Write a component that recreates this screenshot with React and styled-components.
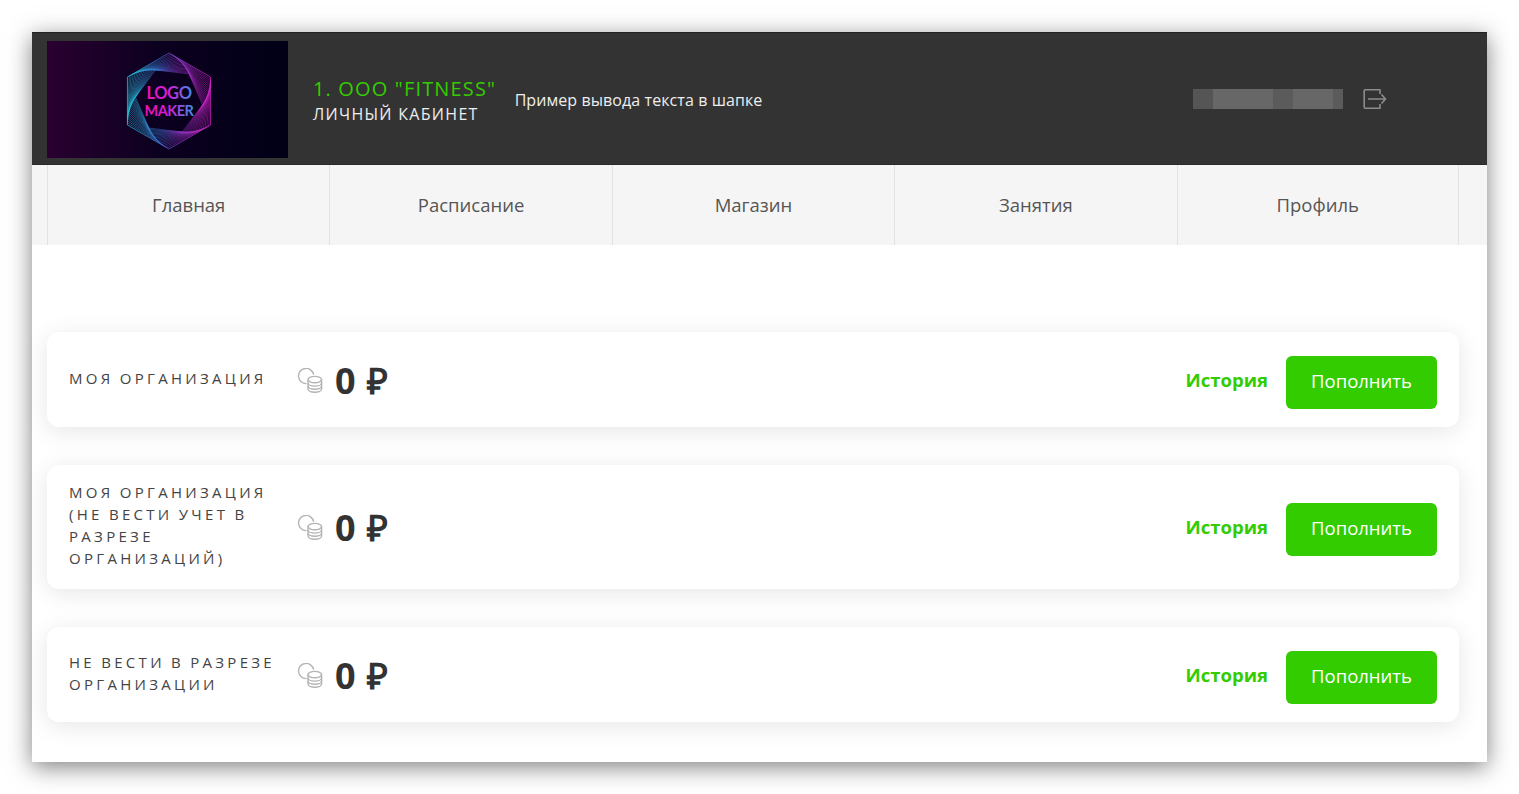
import styled, { createGlobalStyle } from 'styled-components'

const GREEN = '#33cc00'

const GlobalStyle = createGlobalStyle`
  html, body {
    margin: 0;
    padding: 0;
    background: #fff;
  }
  body {
    font-family: 'Open Sans', 'Liberation Sans', sans-serif;
    color: #333;
  }
`

const accounts = [
  { id: 1, name: 'Моя организация' },
  { id: 2, name: 'Моя организация (не вести учет в разрезе организаций)' },
  { id: 3, name: 'Не вести в разрезе организации' },
]

const menu = ['Главная', 'Расписание', 'Магазин', 'Занятия', 'Профиль']

// name is blurred in the screenshot, so just blocks of grey
const blurBlocks = [
  { w: 20, c: '#555' },
  { w: 60, c: '#676767' },
  { w: 20, c: '#5b5b5b' },
  { w: 40, c: '#676767' },
  { w: 10, c: '#5b5b5b' },
]

// each hexagon sits on the sides of the previous one, gives the twisted net
function hexRings(cx, cy, r, steps, t) {
  let pts = []
  for (let i = 0; i < 6; i++) {
    const a = (Math.PI / 3) * i - Math.PI / 2
    pts.push([cx + r * Math.cos(a), cy + r * Math.sin(a)])
  }
  const rings = []
  for (let s = 0; s < steps; s++) {
    rings.push(pts.map(p => p[0].toFixed(2) + ',' + p[1].toFixed(2)).join(' '))
    pts = pts.map((p, i) => {
      const n = pts[(i + 1) % 6]
      return [p[0] + (n[0] - p[0]) * t, p[1] + (n[1] - p[1]) * t]
    })
  }
  return rings
}

const rings = hexRings(122, 60, 48, 17, 0.045)

function Logo() {
  return (
    <LogoBox>
      <svg width="241" height="117" viewBox="0 0 241 117">
        <defs>
          <linearGradient id="logoBg" x1="0" x2="1" y1="0" y2="0">
            <stop offset="0" stopColor="#2a0030" />
            <stop offset="0.45" stopColor="#0c0020" />
            <stop offset="1" stopColor="#000016" />
          </linearGradient>
          <linearGradient id="logoHex" gradientUnits="userSpaceOnUse" x1="78" y1="60" x2="166" y2="60">
            <stop offset="0" stopColor="#1fd6e0" />
            <stop offset="0.38" stopColor="#3a78d8" />
            <stop offset="0.58" stopColor="#8a3ac8" />
            <stop offset="1" stopColor="#e820d0" />
          </linearGradient>
          <linearGradient id="logoText" gradientUnits="userSpaceOnUse" x1="98" y1="0" x2="146" y2="0">
            <stop offset="0" stopColor="#f010b0" />
            <stop offset="0.5" stopColor="#d020d8" />
            <stop offset="1" stopColor="#3a90e8" />
          </linearGradient>
        </defs>
        <rect width="241" height="117" fill="url(#logoBg)" />
        {rings.map((pts, i) => (
          <polygon
            key={i}
            points={pts}
            fill="none"
            stroke="url(#logoHex)"
            strokeWidth={i === 0 ? 0.8 : 0.5}
            opacity={0.9}
          />
        ))}
        <LogoWord x="122" y="58" textAnchor="middle" fontSize="16.5" letterSpacing="-0.4">LOGO</LogoWord>
        <LogoWord x="122" y="75" textAnchor="middle" fontSize="14.5" letterSpacing="-0.5">MAKER</LogoWord>
      </svg>
    </LogoBox>
  )
}

function LogoutIcon() {
  return (
    <svg width="24" height="22" viewBox="0 0 24 22" fill="none" stroke="#8c8c8c" strokeWidth="1.6">
      <path d="M17 6V1.8H2.2a1 1 0 0 0-1 1v16.4a1 1 0 0 0 1 1H17V16" strokeLinejoin="round" />
      <path d="M5 11h17.5M18.5 6.5l4 4.5-4 4.5" />
    </svg>
  )
}

function CoinsIcon() {
  return (
    <CoinsSvg width="26" height="25" viewBox="0 0 26 25" fill="none" stroke="#b4b4b4" strokeWidth="1.4">
      <path d="M9.5 15.6A7.6 7.6 0 1 1 16.6 6.6" />
      <ellipse cx="17.8" cy="11.6" rx="6.8" ry="3.2" />
      <path d="M11 11.6v9.4c0 1.8 3 3.2 6.8 3.2s6.8-1.4 6.8-3.2v-9.4" />
      <path d="M11 14.9c0 1.8 3 3.2 6.8 3.2s6.8-1.4 6.8-3.2" />
      <path d="M11 18c0 1.8 3 3.2 6.8 3.2s6.8-1.4 6.8-3.2" />
    </CoinsSvg>
  )
}

function App() {
  return (
    <>
      <GlobalStyle />
      <Page>
        <Window>
          <Header>
            <Logo />
            <TitleBlock>
              <OrgName>1. ООО "FITNESS"</OrgName>
              <CabinetLabel>Личный кабинет</CabinetLabel>
            </TitleBlock>
            <HeaderNote>Пример вывода текста в шапке</HeaderNote>
            <UserBox>
              <BlurName>
                {blurBlocks.map((b, i) => (
                  <BlurPiece key={i} $w={b.w} $c={b.c} />
                ))}
              </BlurName>
              <LogoutIcon />
            </UserBox>
          </Header>

          <Nav>
            {menu.map((item, i) => (
              <NavItem key={item} $last={i === menu.length - 1}>{item}</NavItem>
            ))}
          </Nav>

          <Content>
            {accounts.map(acc => (
              <Card key={acc.id}>
                <CardName>{acc.name}</CardName>
                <CoinsIcon />
                <Amount>0 ₽</Amount>
                <HistoryLink>История</HistoryLink>
                <TopUpButton>Пополнить</TopUpButton>
              </Card>
            ))}
          </Content>
        </Window>
      </Page>
    </>
  )
}

const Page = styled.div`
  padding: 32px 32px 32px;
  box-sizing: border-box;
  height: 794px;
  overflow: hidden;
`

const Window = styled.div`
  background: #fff;
  height: 730px;
  box-shadow: 0 5px 22px rgba(0, 0, 0, 0.5);
`

const Header = styled.header`
  display: flex;
  align-items: center;
  height: 133px;
  box-sizing: border-box;
  padding: 2px 100px 0 15px;
  background: #333333;
  border-top: 1px solid #222;
  border-bottom: 1px solid #2a2a2a;
`

const LogoBox = styled.div`
  flex: none;
  width: 241px;
  height: 117px;
  line-height: 0;
`

const LogoWord = styled.text`
  font-family: 'Lato', 'Open Sans', sans-serif;
  font-weight: 700;
  fill: url(#logoText);
`

const TitleBlock = styled.div`
  margin-left: 25px;
  padding-top: 3px;
`

const OrgName = styled.div`
  font-size: 20px;
  line-height: 26px;
  letter-spacing: 1.15px;
  color: ${GREEN};
`

const CabinetLabel = styled.div`
  font-size: 16px;
  font-weight: 500;
  line-height: 24px;
  letter-spacing: 1.3px;
  text-transform: uppercase;
  color: #eeeeee;
`

const HeaderNote = styled.div`
  margin-left: 18.5px;
  font-size: 16px;
  font-weight: 500;
  letter-spacing: 0.08px;
  color: #eeeeee;
`

const UserBox = styled.div`
  display: flex;
  align-items: center;
  gap: 20px;
  margin: 0 0 2px auto;
`

const BlurName = styled.div`
  display: flex;
  height: 20px;
`

const BlurPiece = styled.span`
  width: ${p => p.$w}px;
  background: ${p => p.$c};
`

const Nav = styled.nav`
  display: grid;
  grid-template-columns: repeat(5, 282.4px);
  height: 80px;
  padding: 0 0 0 15px;
  background: #f5f5f5;
`

const NavItem = styled.a`
  display: flex;
  align-items: center;
  justify-content: center;
  padding-bottom: 2px;
  font-size: 18.5px;
  color: #555555;
  border-left: 1px solid #e2e2e2;
  border-right: ${p => (p.$last ? '1px solid #e2e2e2' : 'none')};
`

const Content = styled.main`
  display: flex;
  flex-direction: column;
  gap: 38px;
  padding: 87px 28px 0 15px;
`

const Card = styled.section`
  display: flex;
  align-items: center;
  min-height: 95px;
  box-sizing: border-box;
  padding: 16px 22px 17px;
  background: #fff;
  border-radius: 12px;
  box-shadow: 0 4px 24px rgba(0, 0, 0, 0.1);
`

const CardName = styled.div`
  flex: none;
  width: 215px;
  margin: 0 14px 3px 0;
  font-size: 15px;
  line-height: 22px;
  letter-spacing: 3.3px;
  word-spacing: -1px;
  text-transform: uppercase;
  color: #444444;
`

const CoinsSvg = styled.svg`
  flex: none;
  margin: 2px 0 0 -1px;
`

const Amount = styled.div`
  margin: 3px 0 0 12px;
  font-size: 36px;
  font-weight: 700;
  line-height: 44px;
  word-spacing: 2px;
  color: #333333;
`

const HistoryLink = styled.a`
  margin: 0 0 0 auto;
  font-size: 18.5px;
  font-weight: 700;
  color: ${GREEN};
`

const TopUpButton = styled.button`
  width: 151px;
  height: 53px;
  margin: 6px 0 0 18px;
  padding: 0 0 4px;
  border: none;
  border-radius: 6px;
  background: ${GREEN};
  font-family: inherit;
  font-size: 18.5px;
  color: #fff;
`

export default App
